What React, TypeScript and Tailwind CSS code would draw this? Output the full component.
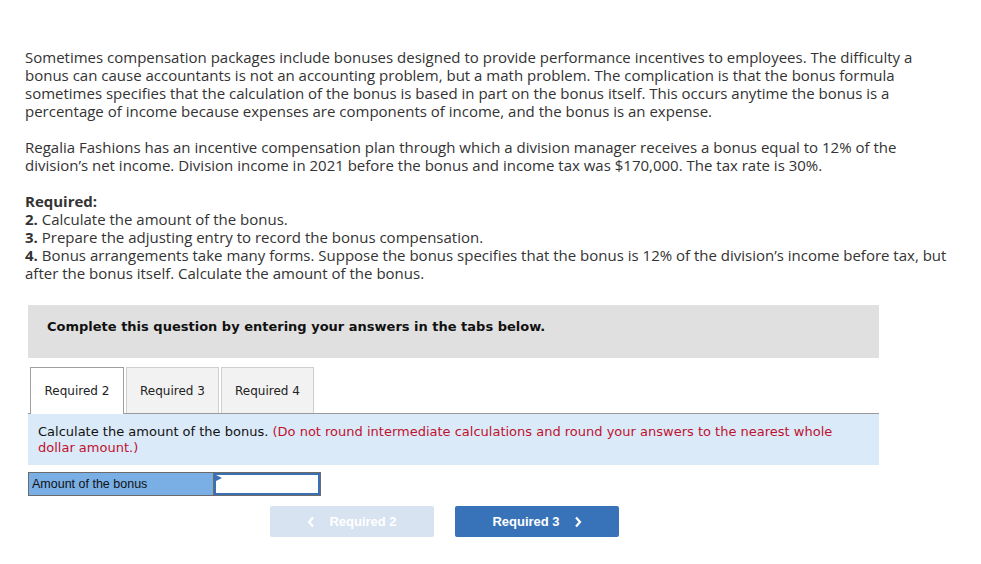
import React from 'react'

const bodyFont = { fontFamily: '"Open Sans", "Liberation Sans", sans-serif' }

function Intro() {
  return (
    <div className='text-[15px] leading-[18px] text-[#333]' style={bodyFont}>
      <p>
        Sometimes compensation packages include bonuses designed to provide performance incentives to employees. The difficulty a<br />
        bonus can cause accountants is not an accounting problem, but a math problem. The complication is that the bonus formula<br />
        sometimes specifies that the calculation of the bonus is based in part on the bonus itself. This occurs anytime the bonus is a<br />
        percentage of income because expenses are components of income, and the bonus is an expense.
      </p>
      <p className='mt-[18px]'>
        Regalia Fashions has an incentive compensation plan through which a division manager receives a bonus equal to 12% of the<br />
        division’s net income. Division income in 2021 before the bonus and income tax was $170,000. The tax rate is 30%.
      </p>
      <div className='mt-[18px]'>
        <p className='font-bold'>Required:</p>
        <p><span className='font-bold'>2.</span> Calculate the amount of the bonus.</p>
        <p><span className='font-bold'>3.</span> Prepare the adjusting entry to record the bonus compensation.</p>
        <p>
          <span className='font-bold'>4.</span> Bonus arrangements take many forms. Suppose the bonus specifies that the bonus is 12% of the division’s income before tax, but<br />
          after the bonus itself. Calculate the amount of the bonus.
        </p>
      </div>
    </div>
  )
}

function Tabs() {
  const tabs = ['Required 2', 'Required 3', 'Required 4']
  return (
    <div className='flex items-end mt-[9px] h-[47px] border-b border-[#999]'>
      <div className='w-[2px]' />
      {tabs.map((t, i) =>
        i === 0 ? (
          <div
            key={t}
            className='w-[94px] h-[47px] -mb-px flex items-center justify-center bg-white border border-b-0 border-[#a0a0a0] text-[12px] text-[#222]'
          >
            {t}
          </div>
        ) : (
          <div
            key={t}
            className='ml-[2px] w-[93px] h-[46px] flex items-center justify-center bg-[#f2f2f2] border border-b-0 border-[#cfcfcf] text-[12px] text-[#222]'
          >
            {t}
          </div>
        )
      )}
    </div>
  )
}

function Question() {
  return (
    <div className='mt-[23px] w-[851px] ml-[3px]' style={{ fontFamily: '"DejaVu Sans", Verdana, sans-serif' }}>
      <div className='bg-[#e0e0e0] h-[53px] pt-[14px] pl-[19px] text-[13px] leading-[16px] font-bold text-[#111]'>
        Complete this question by entering your answers in the tabs below.
      </div>
      <Tabs />
      <div className='bg-[#daeaf8] h-[51px] pl-[10px] pt-[10px] text-[13px] leading-[16px] text-[#111]'>
        Calculate the amount of the bonus.{' '}
        <span className='text-[#c0122f]'>
          (Do not round intermediate calculations and round your answers to the nearest whole<br />
          dollar amount.)
        </span>
      </div>
      <div className='mt-[7px] flex w-[293px] h-[24px] border border-[#6b6b6b]' style={{ fontFamily: '"Liberation Sans", Arial, sans-serif' }}>
        <div className='w-[185px] bg-[#7aafe6] border-r border-[#6b6b6b] flex items-center pl-[3px] text-[12.5px] text-[#111]'>
          Amount of the bonus
        </div>
        <div className='relative flex-1 border-2 border-[#3b70b5] bg-white'>
          <svg className='absolute left-0 top-0' width='6' height='8' viewBox='0 0 6 8'>
            <path d='M0 0 L6 3 L0 6 Z' fill='#3b70b5' />
          </svg>
          <input className='w-full h-full outline-none bg-transparent' />
        </div>
      </div>
      <div className='mt-[10px] flex gap-[21px] ml-[242px]' style={{ fontFamily: '"Liberation Sans", Arial, sans-serif' }}>
        <button className='w-[164px] h-[31px] rounded-[2px] bg-[#d7e3f1] text-white font-bold text-[13px] flex items-center justify-center gap-[14px]'>
          <svg width='8' height='12' viewBox='0 0 8 12'>
            <path d='M6 1.5 L2 6 L6 10.5' stroke='white' strokeWidth='2.2' fill='none' />
          </svg>
          Required 2
        </button>
        <button className='w-[164px] h-[31px] rounded-[2px] bg-[#3873b9] text-white font-bold text-[13px] flex items-center justify-center gap-[14px]'>
          Required 3
          <svg width='8' height='12' viewBox='0 0 8 12'>
            <path d='M2 1.5 L6 6 L2 10.5' stroke='white' strokeWidth='2.2' fill='none' />
          </svg>
        </button>
      </div>
    </div>
  )
}

export default function App() {
  return (
    <div className='w-[981px] h-[564px] bg-white pl-[25px] pt-[48px]'>
      <Intro />
      <Question />
    </div>
  )
}
